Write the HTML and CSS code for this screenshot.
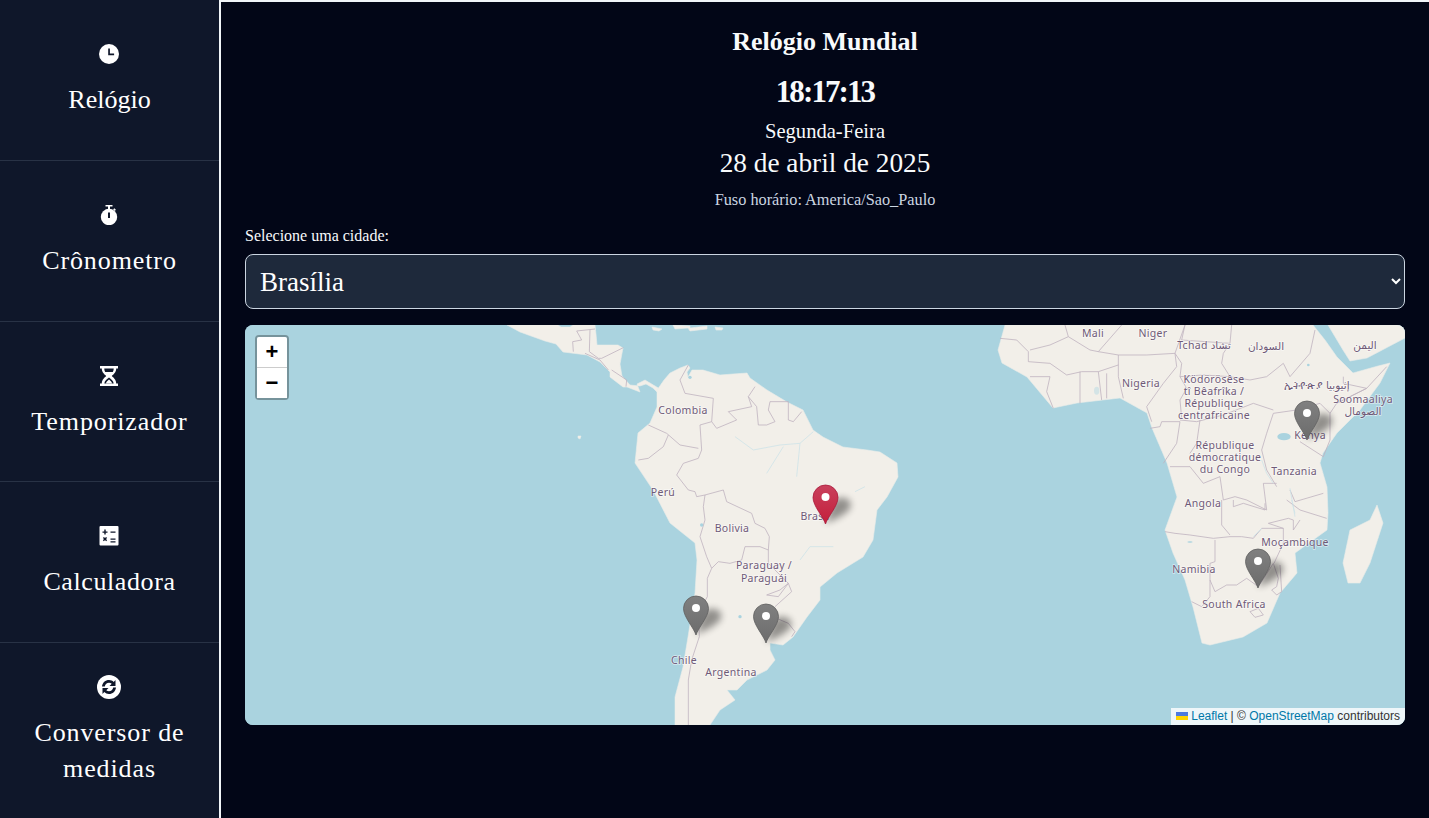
FILE: index.html
```html
<!DOCTYPE html>
<html lang="pt-BR">
<head>
<meta charset="utf-8">
<title>Relógio Mundial</title>
<link rel="stylesheet" href="styles.css">
</head>
<body>
<div class="app">
  <nav class="sidebar">
    <a class="nav-item nav-item-tight">
      <svg class="nav-icon" viewBox="0 0 20 20"><circle cx="10" cy="10" r="10" fill="#fff"/><path d="M9.2 4.500h1.700v5h4.200v1.700H9.200z" fill="#0f172a"/></svg>
      <span>Relógio</span>
    </a>
    <a class="nav-item">
      <svg class="nav-icon" viewBox="0 0 20 20"><path d="M6.500 0h7v1.600h-7zM9 1.600h2v2.400H9z" fill="#fff"/><path d="M15.300 3.200l1.600 1.500-1.200 1.200-1.600-1.500z" fill="#fff"/><circle cx="10" cy="12" r="8.200" fill="#fff"/><rect x="9" y="7.500" width="2" height="5.500" fill="#0f172a"/></svg>
      <span>Crônometro</span>
    </a>
    <a class="nav-item">
      <svg class="nav-icon" viewBox="0 0 20 20"><path d="M1 0h18v2.500h-1.800c0 4-2.800 5.800-4.400 7.500 1.600 1.700 4.400 3.500 4.400 7.500H19V20H1v-2.500h1.800c0-4 2.800-5.800 4.400-7.500C5.600 8.300 2.800 6.500 2.800 2.500H1z" fill="#fff"/><path d="M5.300 2.500h9.400c0 1.500-.4 2.600-.9 3.500H6.200c-.5-.9-.9-2-.9-3.500zM10 11.500c-2 1.700-4.300 3-4.700 6h9.400c-.4-3-2.700-4.300-4.700-6z" fill="#0f172a"/><path d="M6.800 6.800h6.400L10 9.300zM10 13.600c-1.500 1.200-2.700 2.300-3.100 3.900h6.200c-.4-1.600-1.600-2.700-3.100-3.900z" fill="#fff"/></svg>
      <span>Temporizador</span>
    </a>
    <a class="nav-item nav-item-mid">
      <svg class="nav-icon" viewBox="0 0 20 20"><rect x="0.500" width="19" height="19.500" rx="1" fill="#fff"/><path d="M3.500 5h5v1.300h-5zM5.300 3.100h1.400v5H5.300zM11.500 5h5v1.300h-5zM11.500 12h5v1.300h-5zM11.500 14.700h5V16h-5zM3.900 11.500l1 -1 1.100 1.100 1.100-1.100 1 1-1.100 1.100 1.100 1.100-1 1-1.100-1.100-1.100 1.100-1-1 1.100-1.100z" fill="#0f172a" transform="translate(0 .5)"/></svg>
      <span>Calculadora</span>
    </a>
    <a class="nav-item nav-item-last">
      <svg class="nav-icon nav-icon-lg" viewBox="0 0 24 24"><circle cx="12" cy="12" r="12" fill="#fff"/><path d="M5 11.500C5.300 7.700 8.400 5 12 5c1.900 0 3.500.7 4.700 1.900L18.500 5v6h-6l2.200-2.200C13.900 8 13 7.700 12 7.700c-2.100 0-3.900 1.600-4.200 3.800z" fill="#0f172a"/><path d="M19 12.500c-.3 3.800-3.400 6.500-7 6.500-1.900 0-3.500-.7-4.700-1.900L5.500 19v-6h6l-2.200 2.200c.8.800 1.700 1.100 2.700 1.100 2.100 0 3.900-1.600 4.200-3.800z" fill="#0f172a"/></svg>
      <span>Conversor de medidas</span>
    </a>
  </nav>

  <main class="content">
    <header class="clock">
      <h1 class="clock-title">Relógio Mundial</h1>
      <div class="clock-time">18:17:13</div>
      <div class="clock-day">Segunda-Feira</div>
      <div class="clock-date">28 de abril de 2025</div>
      <div class="clock-zone">Fuso horário: America/Sao_Paulo</div>
    </header>

    <label class="city-label" for="city">Selecione uma cidade:</label>
    <select class="city-select" id="city">
      <option>Brasília</option>
      <option>Santiago</option>
      <option>Buenos Aires</option>
      <option>Joanesburgo</option>
      <option>Nairóbi</option>
    </select>

    <div class="map">
      <svg class="map-canvas" viewBox="245 325 1160 400" aria-label="Mapa">
        <defs>
          <linearGradient id="pin-red" x1="0" y1="0" x2="0" y2="1">
            <stop offset="0" stop-color="#c9405c"/><stop offset="1" stop-color="#c41f3b"/>
          </linearGradient>
          <linearGradient id="pin-grey" x1="0" y1="0" x2="0" y2="1">
            <stop offset="0" stop-color="#808080"/><stop offset="1" stop-color="#6c6c6c"/>
          </linearGradient>
          <filter id="blur" x="-60%" y="-60%" width="220%" height="220%"><feGaussianBlur stdDeviation="3.500"/></filter>
          <path id="pin" d="M0 0C-2 -7-12.500 -18-12.500 -26.500A12.500 12.500 0 0 1 12.500 -26.500C12.500 -18 2 -7 0 0z"/>
          <g id="pin-mark"><path class="pin-shadow" d="M0 -1L7 -22C13 -29 27 -27 25 -17C23 -11 9 -4 0 -1z"/><use href="#pin" fill="url(#pin-grey)" stroke="#5f5f5f" stroke-width=".8"/><circle cy="-27" r="4" fill="#fff"/></g>
          <g id="pin-mark-red"><path class="pin-shadow" d="M0 -1L7 -22C13 -29 27 -27 25 -17C23 -11 9 -4 0 -1z"/><use href="#pin" fill="url(#pin-red)" stroke="#a9183a" stroke-width=".8"/><circle cy="-27" r="4" fill="#fff"/></g>
        </defs>

        <rect class="sea" x="245" y="325" width="1160" height="400"/>

        <!-- Central America and Mexico -->
        <path class="land" d="M507 325L520 332 545 341 556 344 563 352 587 355 600 362 610 372 610 377 623 387 627 387 640 392 637 384 645 380 655 386 660 389 657 392 653 388 646 384 640 386 630 385 622 376 620 364 623 348 618 345 597 345 596 334 595 325 573 325 570 327 561 327 558 325z"/>
        <!-- Caribbean islands -->
        <path class="land" d="M652 327L662 329 659 331 653 330zM673 325L690 326 690 328 707 326 707 329 690 331 688 328 675 329zM715 327L723 328 722 330 716 330zM578 436L581 436 580 439 578 438z"/>
        <!-- South America -->
        <path class="land" d="M657 390L664 380 670 373 680 368 688 365 690 368 687 372 688 377 692 370 703 370 720 375 733 374 747 373 750 378 767 390 787 402 803 410 813 430 823 437 843 447 867 450 880 452 897 463 898 477 887 497 877 510 873 540 863 557 837 573 820 587 820 600 807 617 793 637 783 645 770 643 770 650 775 660 767 670 747 680 737 690 727 690 735 700 720 710 710 725 675 725 675 697 683 667 688 637 695 593 697 560 695 543 670 523 653 490 635 463 638 433 650 423 657 407z"/>
        <!-- Africa -->
        <path class="land" d="M1005 325L998 350 1002 363 1027 377 1053 408 1077 403 1120 398 1147 413 1152 428 1167 463 1177 497 1165 530 1173 553 1185 580 1193 607 1202 643 1210 645 1243 637 1267 623 1280 593 1297 573 1295 553 1327 530 1328 513 1327 487 1320 463 1323 453 1337 433 1360 410 1380 383 1388 367 1390 363 1378 366 1353 373 1343 363 1337 357 1325 340 1313 325z"/>
        <!-- Arabia -->
        <path class="land" d="M1328 325L1343 350 1350 361 1367 358 1405 338 1405 325z"/>
        <!-- Madagascar -->
        <path class="land" d="M1377 505L1383 523 1370 563 1360 583 1348 583 1343 563 1350 530 1370 520z"/>

        <!-- South America borders and rivers -->
        <g transform="translate(620 360) scale(.33333)">
          <g class="border">
            <polyline points="205,15 180,60 195,100 280,115 275,185 290,205 350,180 325,155 395,140 385,110 405,80"/>
            <polyline points="385,110 410,140 415,195 440,195 465,185 445,150 450,125 505,125 505,180 520,185 545,155"/>
            <polyline points="275,185 240,195 245,270 235,295 190,310 170,345 205,390 225,395 230,410 255,405 310,390 320,425 395,460 405,490 435,505 448,530 445,570 420,560 375,560 365,600"/>
            <polyline points="85,195 140,220 180,255 235,265"/>
            <polyline points="145,225 130,260 85,295 55,300"/>
            <polyline points="255,405 250,440 255,480 240,530 260,590 275,625"/>
            <polyline points="275,625 295,605 330,610 365,600"/>
            <polyline points="445,570 445,610 505,670 480,690 440,705 475,710 505,670 515,695 465,740"/>
            <polyline points="275,625 262,655 262,710 235,760 238,830 215,900 205,960 205,1095"/>
            <polyline points="470,775 505,790 525,815 515,830"/>
          </g>
          <g class="river">
            <polyline points="345,230 400,270 480,255 540,250 580,215"/>
            <polyline points="440,340 490,260"/>
            <polyline points="530,350 540,250"/>
            <polyline points="540,600 570,560 640,560"/>
            <polyline points="705,395 735,380"/>
          </g>
          <circle class="lake" cx="245" cy="495" r="5"/>
          <circle class="lake" cx="360" cy="770" r="5"/>
          <circle class="lake" cx="210" cy="52" r="5"/>
        </g>

        <!-- Central America borders -->
        <g transform="translate(530 325) scale(.33333)">
          <g class="border">
            <polyline points="130,80 128,50 155,45 140,18 195,12"/>
            <polyline points="180,15 178,80 205,100 215,100 280,68"/>
            <polyline points="165,85 210,105 235,135"/>
            <polyline points="245,135 290,165 288,185"/>
          </g>
        </g>

        <!-- Central Africa borders -->
        <g transform="translate(990 320) scale(.33333)">
          <g class="border">
            <polyline points="30,55 80,60 115,95 115,125 180,130 230,165"/>
            <polyline points="225,15 235,50 180,75 120,90"/>
            <polyline points="235,50 300,90 325,95 395,15"/>
            <polyline points="325,95 385,105 470,105 555,100 585,15"/>
            <polyline points="230,165 275,155 325,155 385,135 385,105"/>
            <polyline points="270,155 270,250"/>
            <polyline points="325,155 335,240"/>
            <polyline points="350,160 350,235"/>
            <polyline points="385,135 385,170 400,235"/>
            <polyline points="555,100 560,140 520,190 470,260 485,305"/>
            <polyline points="555,100 575,130 570,170 590,205 570,240 575,295"/>
            <polyline points="585,15 575,60 720,70 725,15"/>
            <polyline points="720,70 700,100 695,130 720,170"/>
            <polyline points="570,170 640,165 720,170 780,180 830,170 880,130 900,170"/>
            <polyline points="570,300 620,305 700,285 790,250 850,270"/>
            <polyline points="900,170 960,100 975,30"/>
            <polyline points="850,280 920,270 990,250 1020,280 1040,250 1130,205 1190,140"/>
            <polyline points="1040,250 1130,205 1060,190 1060,170"/>
            <polyline points="1020,280 1020,360 1000,410"/>
            <polyline points="930,365 1000,410"/>
            <polyline points="850,280 830,340 815,390 830,450 860,500"/>
            <polyline points="900,510 915,545 1000,520"/>
            <polyline points="540,440 600,440 640,490 690,470 700,540 735,530 770,540 830,570 820,490 860,490"/>
            <polyline points="480,325 510,320 515,305 570,305 560,370 520,430"/>
            <polyline points="630,300 620,370 600,400"/>
            <polyline points="120,170 180,170 170,215 190,265"/>
          </g>
          <g class="river">
            <polyline points="815,420 830,460 850,490"/>
            <polyline points="900,505 915,590"/>
          </g>
          <ellipse class="lake" cx="882" cy="350" rx="20" ry="11"/>
          <ellipse class="lake-faint" cx="320" cy="212" rx="8" ry="12"/>
          <circle class="lake" cx="955" cy="135" r="4"/>
        </g>

        <!-- Southern Africa borders -->
        <g transform="translate(1130 500) scale(.33333)">
          <g class="border">
            <polyline points="105,95 135,100 180,105 250,115 300,110 335,110"/>
            <polyline points="275,0 275,75 300,105"/>
            <polyline points="255,120 255,185 240,190 240,290"/>
            <polyline points="240,240 255,275 290,255 320,255 350,235 385,260 430,190 445,235 440,260 425,270 440,285 455,275 450,195"/>
            <polyline points="335,110 370,115 395,85 460,85 415,70"/>
            <polyline points="415,70 475,55 490,60 490,90 510,60"/>
            <polyline points="470,0 510,30 590,55"/>
            <polyline points="240,290 215,320 185,305"/>
            <polygon points="360,335 385,325 400,345 375,352"/>
            <polyline points="460,85 460,130 432,190"/>
            <polyline points="310,0 310,20 340,10 405,30 405,10"/>
          </g>
          <g class="river">
            <polyline points="485,0 495,40"/>
            <polyline points="370,110 395,85"/>
          </g>
          <ellipse class="lake" cx="180" cy="126" rx="8" ry="2"/>
        </g>

        <!-- Place names -->
        <g class="place">
          <text x="1093" y="337">Mali</text>
          <text x="1153" y="337">Niger</text>
          <text x="1204" y="349">Tchad تشاد</text>
          <text x="1266" y="350">السودان</text>
          <text x="1365" y="349">اليمن</text>
          <text x="1141" y="387">Nigeria</text>
          <text x="1214" y="383">Ködörösêse</text>
          <text x="1214" y="395">tî Bêafrîka /</text>
          <text x="1214" y="407">République</text>
          <text x="1214" y="419">centrafricaine</text>
          <text x="1317" y="389">ኢትዮጵያ إثيوبيا</text>
          <text x="1363" y="403">Soomaaliya</text>
          <text x="1363" y="415">الصومال</text>
          <text x="1310" y="439">Kenya</text>
          <text x="1225" y="449">République</text>
          <text x="1225" y="461">démocratique</text>
          <text x="1225" y="473">du Congo</text>
          <text x="1294" y="475">Tanzania</text>
          <text x="1203" y="507">Angola</text>
          <text x="683" y="414">Colombia</text>
          <text x="663" y="496">Perú</text>
          <text x="732" y="532">Bolivia</text>
          <text x="815" y="520">Brasil</text>
          <text x="764" y="569">Paraguay /</text>
          <text x="764" y="582">Paraguái</text>
          <text x="684" y="664">Chile</text>
          <text x="731" y="676">Argentina</text>
          <text x="1295" y="546">Moçambique</text>
          <text x="1194" y="573">Namibia</text>
          <text x="1234" y="608">South Africa</text>
        </g>

        <!-- Markers -->
        <use href="#pin-mark-red" x="825.500" y="524"/>
        <use href="#pin-mark" x="696" y="635"/>
        <use href="#pin-mark" x="766" y="643"/>
        <use href="#pin-mark" x="1258" y="588"/>
        <use href="#pin-mark" x="1307" y="440"/>
      </svg>

      <div class="zoom">
        <a class="zoom-btn zoom-in">+</a>
        <a class="zoom-btn">−</a>
      </div>

      <div class="attribution"><svg class="flag" viewBox="0 0 12 8"><rect width="12" height="4" fill="#4C7BE1"/><rect y="4" width="12" height="4" fill="#FFD500"/></svg> <a>Leaflet</a> | © <a>OpenStreetMap</a> contributors</div>
    </div>
  </main>
</div>
</body>
</html>
```
FILE: styles.css
```css
* { box-sizing: border-box; }

html, body {
  margin: 0;
  height: 100%;
  overflow: hidden;
}

body {
  background: #020617;
  color: #f8fafc;
  font-family: "Liberation Serif", "Times New Roman", serif;
}

.app {
  display: flex;
  height: 818px;
}

.sidebar {
  flex: 0 0 221px;
  height: 818px;
  overflow: hidden;
  background: #0f172a;
  border-right: 2px solid #f1f5f9;
}

.nav-item {
  display: flex;
  flex-direction: column;
  align-items: center;
  min-height: 160.800px;
  padding: 44px 16px 0;
  border-bottom: 1px solid #283245;
  font-size: 26px;
  line-height: 36px;
  letter-spacing: .9px;
  text-align: center;
  color: #fff;
}

.nav-item-tight { letter-spacing: 0; }

.nav-item-mid { letter-spacing: .6px; }

.nav-item-last {
  padding-top: 32px;
  border-bottom: 0;
}

.nav-icon {
  display: block;
  width: 20px;
  height: 20px;
  margin-right: 1px;
  margin-bottom: 18px;
}

.nav-icon-lg {
  width: 24px;
  height: 24px;
  margin-bottom: 16px;
}

.content {
  flex: 1;
  min-width: 0;
  padding: 24px 24px 0;
  border-top: 2px solid #f1f5f9;
}

.clock {
  text-align: center;
}

.clock-title {
  margin: 0;
  font-size: 26px;
  line-height: 32px;
  font-weight: 700;
}

.clock-time {
  margin-top: 16px;
  font-size: 31px;
  line-height: 36px;
  letter-spacing: -1.900px;
  font-weight: 700;
}

.clock-day {
  margin-top: 7px;
  font-size: 20.600px;
  line-height: 28px;
}

.clock-date {
  margin-top: 2px;
  font-size: 27.300px;
  line-height: 32px;
}

.clock-zone {
  margin-top: 9px;
  font-size: 16.300px;
  line-height: 24px;
  color: #cbd5e1;
}

.city-label {
  display: block;
  margin-top: 12px;
  font-size: 16px;
  line-height: 24px;
}

.city-select {
  display: block;
  width: 100%;
  height: 55px;
  margin-top: 6px;
  padding: 0 10px;
  background: #1e293b;
  border: 1px solid #cbd5e1;
  border-radius: 8px;
  color: #fff;
  font-family: inherit;
  font-size: 27px;
}

.map {
  position: relative;
  height: 400px;
  margin-top: 16px;
  border-radius: 8px;
  overflow: hidden;
  background: #aad3df;
}

.map-canvas {
  display: block;
  width: 100%;
  height: 100%;
}

.sea { fill: #aad3df; }

.land {
  fill: #f2efe9;
  stroke: #e9ecea;
  stroke-width: .6;
}

.border {
  fill: none;
  stroke: #bfb2bf;
  stroke-width: 2.400;
  stroke-linejoin: round;
}

.river {
  fill: none;
  stroke: #cfe3e8;
  stroke-width: 2.500;
}

.lake { fill: #aad3df; }

.lake-faint { fill: #d4e4e6; }

.pin-shadow {
  fill: #000;
  opacity: .4;
  filter: url(#blur);
}

.place {
  font-family: "Noto Sans", "DejaVu Sans", sans-serif;
  font-size: 10.500px;
  letter-spacing: .3px;
  fill: #6f5a78;
  stroke: rgba(255, 255, 255, .55);
  stroke-width: 1.500px;
  paint-order: stroke;
  text-anchor: middle;
}

.zoom {
  position: absolute;
  top: 10px;
  left: 10px;
  width: 34px;
  border: 2px solid rgba(0, 0, 0, .3);
  border-radius: 4px;
  background-clip: padding-box;
}

.zoom-btn {
  display: block;
  width: 30px;
  height: 30px;
  background: #fff;
  color: #000;
  font-family: "Liberation Sans", Arial, sans-serif;
  font-size: 22px;
  font-weight: 700;
  line-height: 30px;
  text-align: center;
}

.zoom-in {
  height: 31px;
  border-bottom: 1px solid #ccc;
  border-radius: 2px 2px 0 0;
}

.attribution {
  position: absolute;
  right: 0;
  bottom: 0;
  height: 17px;
  padding: 0 5px;
  background: rgba(255, 255, 255, .8);
  color: #333;
  font-family: "Liberation Sans", Arial, sans-serif;
  font-size: 12px;
  line-height: 17px;
  white-space: nowrap;
}

.attribution a { color: #0078a8; }

.flag {
  display: inline-block;
  width: 12px;
  height: 8px;
}
```
